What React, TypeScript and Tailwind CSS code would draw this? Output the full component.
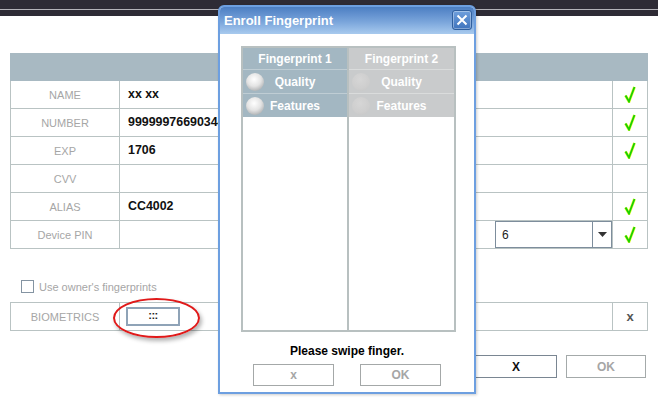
import React from 'react'

const rows = [
  { label: 'NAME', value: 'xx xx', check: true },
  { label: 'NUMBER', value: '9999997669034411', check: true },
  { label: 'EXP', value: '1706', check: true },
  { label: 'CVV', value: '', check: false },
  { label: 'ALIAS', value: 'CC4002', check: true },
  { label: 'Device PIN', value: '', check: true, select: true },
]

function Check() {
  return (
    <svg width="12" height="17" viewBox="0 0 12 17">
      <path d="M1.5 9.5 L5 15.5 L10.5 1" fill="none" stroke="#e8ff3a" strokeWidth="3" />
      <path d="M1.5 9.5 L5 15.5 L10.5 1" fill="none" stroke="#18d000" strokeWidth="1.8" />
    </svg>
  )
}

function Sphere({ faint }: { faint?: boolean }) {
  return (
    <div
      className={
        faint
          ? 'h-[18px] w-[18px] rounded-full bg-[radial-gradient(circle_at_45%_35%,#d6d6d6_0%,#cecece_60%,#c3c3c3_100%)]'
          : 'h-[18px] w-[18px] rounded-full bg-[radial-gradient(circle_at_45%_35%,#ffffff_0%,#e4e4e4_45%,#8f9396_100%)]'
      }
    />
  )
}

function FingerCol({ title, faint }: { title: string; faint?: boolean }) {
  const head = faint ? 'bg-[#c9cbcc]' : 'bg-[#a3b7c2]'
  const line = faint ? 'border-[#dadcdc]' : 'border-[#bfcdd4]'
  return (
    <div className="flex flex-col">
      <div className={`flex h-[21px] items-center justify-center text-[12px] font-bold text-white ${head}`}>
        {title}
      </div>
      {['Quality', 'Features'].map((t) => (
        <div
          key={t}
          className={`grid h-[24px] grid-cols-[24px_1fr_24px] items-center border-t text-[12px] font-bold text-white ${head} ${line}`}
        >
          <div className="pl-[3px]">
            <Sphere faint={faint} />
          </div>
          <div className="text-center">{t}</div>
          <div />
        </div>
      ))}
      <div className="flex-1 bg-white" />
    </div>
  )
}

function EnrollDialog() {
  return (
    <div className="absolute left-[218px] top-[5px] flex h-[389px] w-[258px] flex-col overflow-hidden rounded-t-[6px] border-2 border-[#6d9fe0] bg-white shadow-[1px_1px_3px_rgba(0,0,0,0.2)]">
      <div className="relative flex h-[27px] items-center bg-[linear-gradient(#4c7ec3,#7aa5db_55%,#a8caee)] pl-[4px] text-[13px] font-bold text-white">
        Enroll Fingerprint
        <div className="absolute right-[2px] top-[3px] flex h-[20px] w-[20px] items-center justify-center rounded-[3px] border border-[#2f5f9e] bg-[linear-gradient(#6f9fdc,#3f74bd)] shadow-[inset_0_0_0_1px_rgba(255,255,255,0.35)]">
          <svg width="12" height="12" viewBox="0 0 12 12">
            <path d="M1.5 1.5 L10.5 10.5 M10.5 1.5 L1.5 10.5" stroke="#fff" strokeWidth="2" />
          </svg>
        </div>
      </div>

      <div className="ml-[21px] mt-[12px] grid h-[286px] w-[215px] grid-cols-[106px_1fr] border-2 border-[#b8c0c0]">
        <div className="flex flex-col border-r-2 border-[#b8c0c0]">
          <FingerCol title="Fingerprint 1" />
        </div>
        <FingerCol title="Fingerprint 2" faint />
      </div>

      <div className="mt-[12px] text-center text-[12px] font-bold leading-[15px] text-black">Please swipe finger.</div>

      <div className="mt-[5px] flex justify-center gap-[26px]">
        <div className="flex h-[22px] w-[81px] items-center justify-center border border-[#a4a8a8] text-[12px] font-bold text-[#a6a6a6]">
          x
        </div>
        <div className="flex h-[22px] w-[81px] items-center justify-center border border-[#a4a8a8] text-[12px] font-bold text-[#a6a6a6]">
          OK
        </div>
      </div>
    </div>
  )
}

export default function App() {
  return (
    <div className="relative h-[408px] w-[658px] overflow-hidden bg-white font-['Liberation_Sans',Arial,sans-serif]">
      <div className="h-[16px] bg-[#2e2b35]">
        <div className="h-[9px]" />
        <div className="h-px bg-[#b4b2b8]" />
      </div>

      <div className="ml-[10px] mt-[37px] w-[638px]">
        <div className="h-[28px] bg-[#a8b9c2]" />
        {rows.map((r) => (
          <div key={r.label} className="flex h-[28px] border-x border-b border-[#b9c3c3]">
            <div className="flex w-[109px] items-center justify-center border-r border-[#b9c3c3] pt-[2px] text-[11px] text-[#a6a6a6]">
              {r.label}
            </div>
            <div className="flex flex-1 items-center pl-[8px] text-[12.4px] font-bold text-[#111]">
              {r.select ? (
                <div className="ml-auto flex h-[27px] w-[117px] self-end border border-[#7d8d9c] bg-white">
                  <div className="flex flex-1 items-center pl-[6px] text-[12px] font-normal text-[#222]">6</div>
                  <div className="flex w-[19px] items-center justify-center border-l border-[#7d8d9c]">
                    <svg width="9" height="5" viewBox="0 0 9 5">
                      <path d="M0 0 H9 L4.5 5 Z" fill="#333" />
                    </svg>
                  </div>
                </div>
              ) : (
                r.value
              )}
            </div>
            <div className="flex w-[35px] items-center justify-center border-l border-[#b9c3c3]">
              {r.check && <Check />}
            </div>
          </div>
        ))}
      </div>

      <div className="ml-[21px] mt-[31px] flex h-[13px] items-center gap-[5px]">
        <div className="h-[13px] w-[13px] border border-[#8494a2]" />
        <span className="pt-[2px] text-[11px] text-[#a6a6a6]">Use owner's fingerprints</span>
      </div>

      <div className="ml-[10px] mt-[9px] flex h-[29px] w-[638px] border border-[#b9c3c3]">
        <div className="flex w-[109px] items-center justify-center border-r border-[#b9c3c3] pt-[2px] text-[11px] text-[#a6a6a6]">
          BIOMETRICS
        </div>
        <div className="flex flex-1 items-center pl-[6px]">
          <div className="flex h-[19px] w-[54px] items-center justify-center border-2 border-[#8fa3b7] pb-[2px] text-[11px] font-bold leading-none tracking-[-0.5px] text-[#222]">
            :::
          </div>
        </div>
        <div className="flex w-[35px] items-center justify-center border-l border-[#b9c3c3] text-[13px] font-bold text-[#555]">
          x
        </div>
      </div>

      <div className="mr-[12px] mt-[24px] flex justify-end gap-[9px]">
        <div className="flex h-[23px] w-[82px] items-center justify-center border border-[#7a8692] text-[12px] font-bold text-[#111]">
          X
        </div>
        <div className="flex h-[23px] w-[80px] items-center justify-center border border-[#a4aaaa] text-[12px] font-bold text-[#a6a6a6]">
          OK
        </div>
      </div>

      <div className="absolute left-[113px] top-[298px] h-[40px] w-[87px] rounded-[50%] border-2 border-[#e01a1a] shadow-[2px_3px_4px_rgba(0,0,0,0.3)]" />

      <EnrollDialog />
    </div>
  )
}
